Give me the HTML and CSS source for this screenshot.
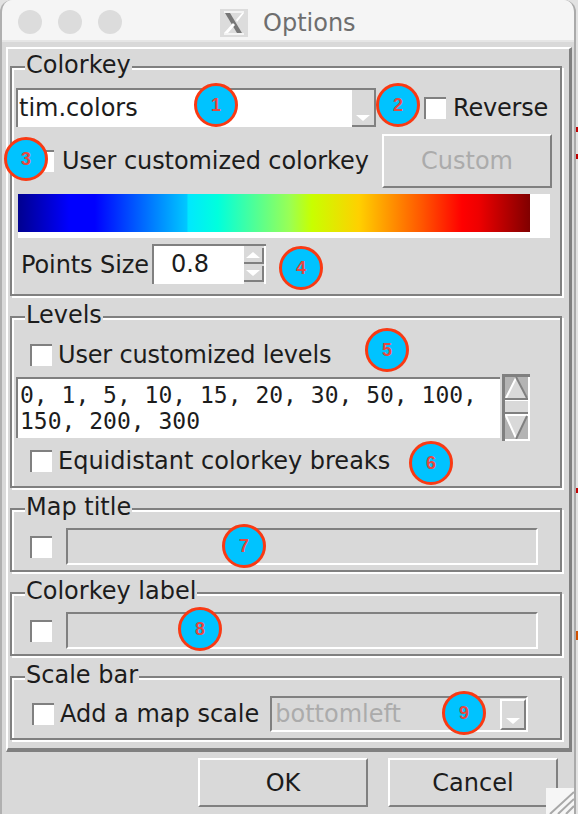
FILE: index.html
```html
<!DOCTYPE html>
<html lang="en">
<head>
<meta charset="utf-8">
<title>Options</title>
<link rel="stylesheet" href="styles.css">
</head>
<body>
<div class="window">
  <header class="titlebar">
    <div class="lights"><span class="light"></span><span class="light"></span><span class="light"></span></div>
    <div class="title">
      <svg class="x-icon" width="28" height="28" viewBox="0 0 28 28"><rect width="28" height="28" fill="#dcdcdc"/><path d="M5 4h5l12 20h-5z" fill="#777"/><path d="M4 24l9-10 2 2-7 8zM16 11l6-7h2l-7 9z" fill="#fff"/><path d="M4 3h20M4 25h20" stroke="#f4f4f4" stroke-width="2"/></svg>
      <span>Options</span>
    </div>
  </header>
  <main class="content">
    <div class="panel">
      <section class="group group-colorkey">
        <div class="legend">Colorkey</div>
        <div class="row row-combo">
          <div class="combo"><span class="combo-text">tim.colors</span><span class="combo-btn"><span class="arrow"></span></span></div>
          <label class="check check-reverse"><span class="box"></span><span>Reverse</span></label>
        </div>
        <div class="row row-custom">
          <label class="check check-user"><span class="box"></span><span>User customized colorkey</span></label>
          <div class="button button-custom">Custom</div>
        </div>
        <div class="colorbar"><div class="ramp"></div></div>
        <div class="row row-points">
          <span class="points-label">Points Size</span>
          <div class="spin">
            <span class="spin-val">0.8</span>
            <span class="spin-btns">
              <span class="spin-btn"><span class="arrow arrow-up"></span></span>
              <span class="spin-btn"><span class="arrow"></span></span>
            </span>
          </div>
        </div>
      </section>

      <section class="group group-levels">
        <div class="legend">Levels</div>
        <label class="check check-levels"><span class="box"></span><span class="tight">User customized levels</span></label>
        <div class="levels-row">
          <div class="textarea">0, 1, 5, 10, 15, 20, 30, 50, 100,<br>150, 200, 300</div>
          <svg class="scroll" width="28" height="67" viewBox="0 0 28 67">
            <rect width="28" height="67" fill="#b4b4b4"/>
            <path d="M3 24L14 3l12 21z" fill="#d9d9d9"/>
            <path d="M4 24L14 4" stroke="#fff" stroke-width="2" fill="none"/>
            <path d="M14 3l11 21" stroke="#808080" stroke-width="2" fill="none"/>
            <rect x="3" y="24" width="23" height="2" fill="#808080"/>
            <rect x="3" y="26" width="23" height="12" fill="#d9d9d9"/>
            <rect x="3" y="26" width="23" height="1" fill="#fff"/>
            <rect x="3" y="38" width="23" height="2" fill="#808080"/>
            <rect x="3" y="40" width="23" height="2" fill="#fff"/>
            <path d="M3 42L14 65l12-23z" fill="#d9d9d9"/>
            <path d="M4 42L14 64" stroke="#fff" stroke-width="2" fill="none"/>
            <path d="M14 65L25 42" stroke="#808080" stroke-width="2" fill="none"/>
            <rect x="3" y="65" width="25" height="2" fill="#fff"/>
            <rect x="26" y="3" width="2" height="64" fill="#fff"/>
            <rect width="28" height="3" fill="#808080"/>
            <rect width="3" height="67" fill="#808080"/>
          </svg>
        </div>
        <label class="check check-equi"><span class="box"></span><span>Equidistant colorkey breaks</span></label>
      </section>

      <section class="group group-entry">
        <div class="legend">Map title</div>
        <div class="row row-entry"><span class="box"></span><div class="entry"></div></div>
      </section>

      <section class="group group-entry">
        <div class="legend">Colorkey label</div>
        <div class="row row-entry"><span class="box"></span><div class="entry"></div></div>
      </section>

      <section class="group group-scale">
        <div class="legend">Scale bar</div>
        <div class="row row-scale">
          <label class="check check-scale"><span class="box"></span><span>Add a map scale</span></label>
          <div class="combo combo-off"><span class="combo-text">bottomleft</span><span class="combo-btn"><span class="arrow"></span></span></div>
        </div>
      </section>
    </div>
    <footer class="actions">
      <div class="button button-action">OK</div>
      <div class="button button-action">Cancel</div>
    </footer>
    <svg class="grip" width="28" height="26" viewBox="0 0 28 26"><rect width="28" height="26" fill="#f6f6f6"/><path d="M4 26L28 4M12 26L28 11M20 26L28 18" stroke="#a8a8a8" stroke-width="2"/></svg>
  </main>
  <span class="badge b1">1</span>
  <span class="badge b2">2</span>
  <span class="badge b3">3</span>
  <span class="badge b4">4</span>
  <span class="badge b5">5</span>
  <span class="badge b6">6</span>
  <span class="badge b7">7</span>
  <span class="badge b8">8</span>
  <span class="badge b9">9</span>
</div>
<span class="tick t1"></span>
<span class="tick t2"></span>
<span class="tick t3"></span>
<span class="tick t4"></span>
</body>
</html>
```
FILE: styles.css
```css
* { box-sizing: border-box; }
html, body { margin: 0; padding: 0; }
body {
  position: relative;
  width: 578px;
  height: 814px;
  overflow: hidden;
  background: #e2e2e2;
  font-family: "DejaVu Sans", sans-serif;
  font-size: 24px;
  color: #1c1c1c;
}
.tick { position: absolute; left: 576px; width: 2px; height: 5px; background: #c00000; }
.t1 { top: 127px; }
.t2 { top: 154px; }
.t3 { top: 488px; }
.t4 { top: 631px; height: 9px; background: #d05000; }
.window {
  position: relative;
  width: 576px;
  height: 814px;
  background: #d9d9d9;
  border-left: 2px solid #b0b0b0;
  border-right: 2px solid #aaa;
  border-radius: 12px 12px 0 0;
  overflow: hidden;
}
.titlebar {
  height: 42px;
  padding-top: 4px;
  background: #f5f5f5;
  border-bottom: 2px solid #e6e6e6;
  display: flex;
  align-items: center;
}
.lights { display: flex; gap: 16px; padding-left: 16px; }
.light { width: 24px; height: 24px; border-radius: 50%; background: #dcdcdc; }
.title {
  display: flex;
  align-items: center;
  gap: 15px;
  margin-left: 98px;
  margin-top: 2px;
  color: #6e6e6e;
}
.content { padding: 5px 2px 0 4px; }
.panel {
  height: 705px;
  padding: 17px 0 0 2px;
  border-top: 2px solid #fff;
  border-left: 2px solid #fff;
  border-right: 3px solid #808080;
  border-bottom: 4px solid #808080;
}
.group {
  position: relative;
  width: 552px;
  border: 2px solid #808080;
  box-shadow: inset 2px 2px 0 #fff, 2px 2px 0 #fff;
  margin-bottom: 20px;
}
.group-colorkey { height: 230px; }
.group-levels { height: 172px; }
.group-entry { height: 64px; }
.group-scale { height: 64px; }
.legend {
  position: absolute;
  top: -16px;
  left: 13px;
  padding: 0 1px;
  line-height: 26px;
  background: #d9d9d9;
}
.row { display: flex; align-items: center; }
.box {
  display: block;
  flex: none;
  width: 22px;
  height: 22px;
  background: #fff;
  border-top: 2px solid #808080;
  border-left: 2px solid #808080;
}
.check { display: flex; align-items: center; }
.tight { letter-spacing: -0.18px; }

.row-combo { padding: 20px 0 0 4px; }
.combo {
  display: flex;
  justify-content: space-between;
  width: 360px;
  height: 39px;
  background: #fff;
  border-top: 2px solid #808080;
  border-left: 2px solid #808080;
}
.combo-text { padding-left: 1px; line-height: 36px; }
.combo-btn {
  width: 24px;
  display: flex;
  justify-content: center;
  align-items: flex-end;
  padding-bottom: 4px;
  background: #d9d9d9;
  border-right: 2px solid #808080;
  border-bottom: 2px solid #808080;
}
.arrow {
  display: block;
  width: 0;
  height: 0;
  border-left: 7px solid transparent;
  border-right: 7px solid transparent;
  border-top: 6px solid #fff;
}
.arrow-up { border-top: 0; border-bottom: 6px solid #fff; }
.check-reverse { margin-left: 48px; gap: 7px; margin-top: 1px; letter-spacing: -0.2px; }
.row-custom { padding: 7px 0 0 20px; justify-content: space-between; }
.check-user { gap: 8px; letter-spacing: -0.08px; }
.button {
  display: flex;
  align-items: center;
  justify-content: center;
  background: #d9d9d9;
  border-top: 2px solid #fff;
  border-left: 2px solid #fff;
  border-right: 2px solid #808080;
  border-bottom: 2px solid #808080;
}
.button-custom { width: 170px; height: 54px; margin-right: 8px; color: #ababab; }
.colorbar { margin: 6px 0 0 6px; width: 532px; height: 44px; background: #fff; }
.ramp {
  width: 512px;
  height: 38px;
  background: linear-gradient(90deg, #00008f 0%, #0000ff 10%, #0000ff 15%, #00c8ff 33%, #00e8ff 33.2%, #00ffdd 39%, #99ff55 53%, #c8ff00 57.4%, #ffd000 66.6%, #ff5500 79%, #ff0000 86.7%, #ee0000 90%, #800000 100%);
}
.row-points { padding: 6px 0 0 9px; gap: 3px; }
.points-label { letter-spacing: -0.1px; margin-top: 1px; }
.spin {
  display: flex;
  width: 114px;
  height: 40px;
  background: #fff;
  border-top: 2px solid #808080;
  border-left: 2px solid #808080;
}
.spin-val { width: 90px; padding-left: 17px; line-height: 37px; }
.spin-btns { display: flex; flex-direction: column; gap: 2px; padding-top: 2px; background: #d9d9d9; }
.spin-btn {
  width: 20px;
  height: 16px;
  display: flex;
  align-items: center;
  justify-content: center;
  background: #d9d9d9;
  border-right: 2px solid #808080;
  border-bottom: 2px solid #808080;
}

.check-levels { padding: 23px 0 0 18px; gap: 6px; }
.levels-row { display: flex; gap: 2px; padding: 8px 0 0 4px; align-items: flex-start; }
.textarea {
  width: 484px;
  height: 61px;
  background: #fff;
  border-top: 2px solid #808080;
  border-left: 2px solid #808080;
  padding: 3px 0 0 2px;
  font-family: "DejaVu Sans Mono", monospace;
  font-size: 23px;
  line-height: 26px;
}
.scroll { display: block; margin: -3px 0; }
.check-equi { padding: 9px 0 0 18px; gap: 6px; }

.row-entry { padding: 18px 0 0 18px; gap: 14px; }
.entry {
  width: 472px;
  height: 37px;
  border-top: 2px solid #808080;
  border-left: 2px solid #808080;
  border-right: 2px solid #fff;
  border-bottom: 2px solid #fff;
}
.row-scale { padding: 18px 0 0 20px; gap: 11px; }
.check-scale { gap: 6px; }
.combo-off {
  width: 258px;
  height: 36px;
  background: #d9d9d9;
  border-right: 2px solid #fff;
  border-bottom: 2px solid #fff;
  color: #ababab;
}
.combo-off .combo-text { padding-left: 3px; line-height: 32px; }
.combo-off .combo-btn {
  width: 26px;
  margin-top: 1px;
  border-top: 2px solid #fff;
  border-left: 2px solid #fff;
}

.actions { display: flex; gap: 20px; padding: 6px 0 0 192px; }
.button-action { width: 170px; height: 49px; }
.grip { position: absolute; right: 0; bottom: 0; }

.badge {
  position: absolute;
  width: 44px;
  height: 44px;
  border-radius: 50%;
  background: #00c3ff;
  border: 3px solid #f93a14;
  display: flex;
  align-items: center;
  justify-content: center;
  font-family: "Liberation Sans", sans-serif;
  font-weight: 700;
  font-size: 18px;
  color: #e8473f;
}
.b1 { left: 192px; top: 83px; }
.b2 { left: 374px; top: 83px; }
.b3 { left: 2px; top: 137px; }
.b4 { left: 277px; top: 246px; }
.b5 { left: 363px; top: 328px; }
.b6 { left: 407px; top: 441px; }
.b7 { left: 220px; top: 524px; }
.b8 { left: 176px; top: 607px; }
.b9 { left: 440px; top: 691px; }
```
